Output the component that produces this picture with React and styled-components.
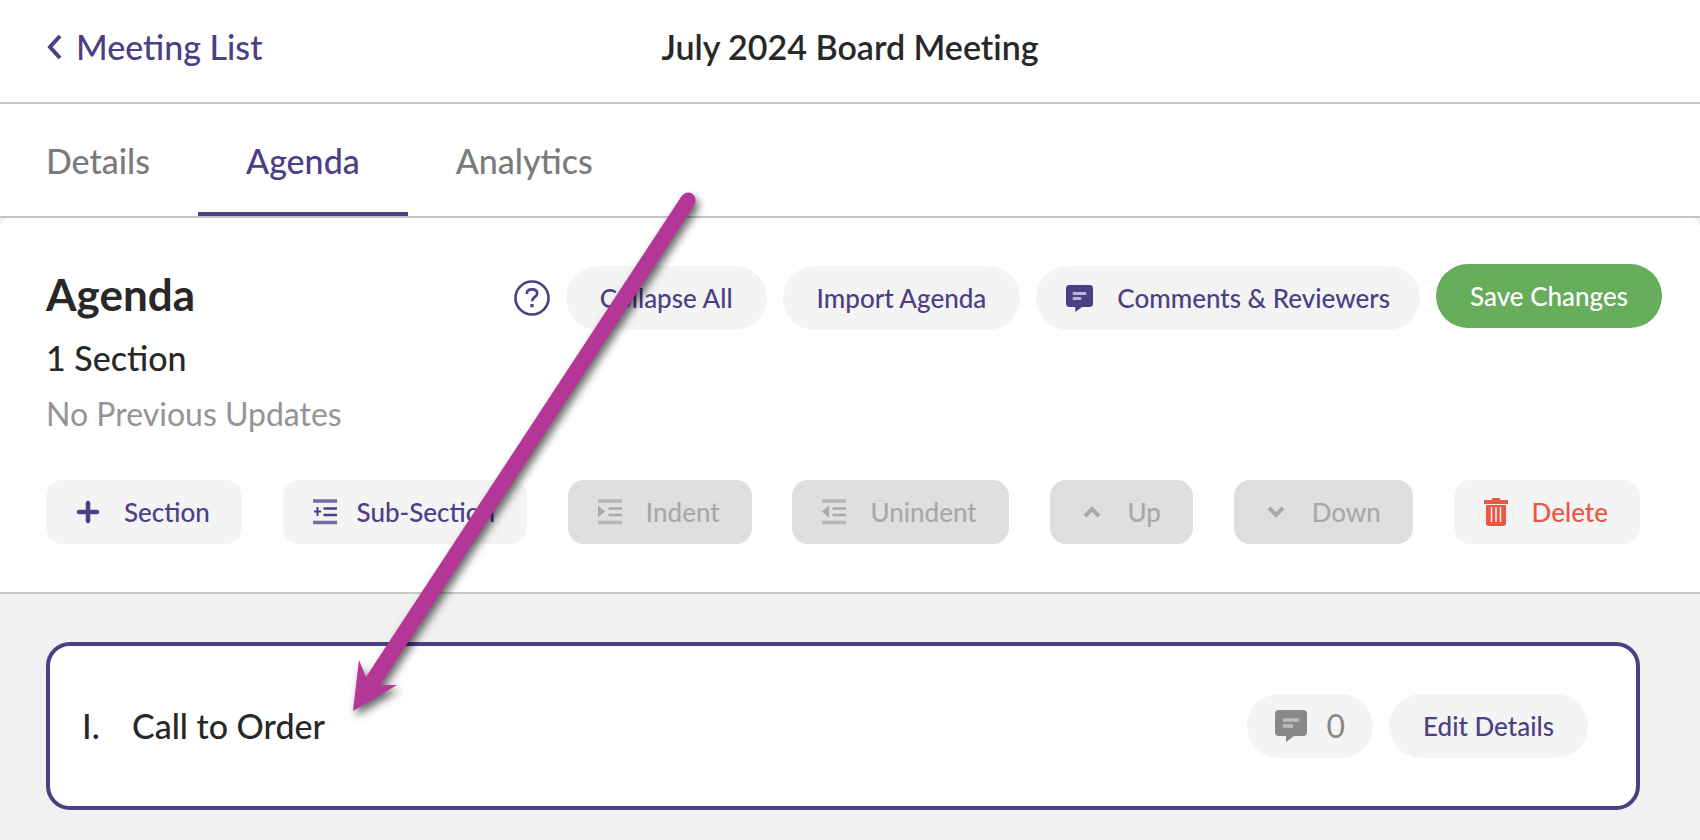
import React from "react";
import styled, { createGlobalStyle, css } from "styled-components";

const purple = "#4b3f86";
const ink = "#282828";

const GlobalStyle = createGlobalStyle`
  *, *::before, *::after { box-sizing: border-box; }
  html, body, #root { min-height: 100vh; }
  body { margin: 0; background: #f1f1f1; color: ${ink}; font-family: Lato, "Liberation Sans", sans-serif; font-weight: 500; }
  h1, h2, h3, p { margin: 0; }
  button { font-family: inherit; border: 0; margin: 0; cursor: pointer; }
`;

const Page = styled.div`
  position: relative;
  min-height: 100vh;
  overflow: hidden;
`;

const TopBar = styled.header`
  display: grid;
  grid-template-columns: 1fr auto 1fr;
  align-items: center;
  height: 104px;
  padding: 0 46px 8px;
  background: #fff;
  border-bottom: 2px solid #c9c9c9;
`;

const BackLink = styled.a`
  display: inline-flex;
  align-items: center;
  justify-self: start;
  gap: 14px;
  color: ${purple};
  font-size: 34px;
  line-height: 40px;
  text-decoration: none;
`;

const PageTitle = styled.h1`
  font-size: 34px;
  line-height: 40px;
  font-weight: 600;
  font-variant-ligatures: none;
`;

const Tabs = styled.nav`
  display: flex;
  height: 114px;
  background: #fff;
  border-bottom: 2px solid #c5c5c5;
`;

const Tab = styled.a`
  display: flex;
  align-items: center;
  padding: 6px 48px 0;
  border-bottom: 4px solid ${(p) => (p.$active ? purple : "transparent")};
  color: ${(p) => (p.$active ? purple : "#7b7b7b")};
  font-size: 34px;
  line-height: 40px;
  text-decoration: none;
  &:first-child { padding-left: 46px; }
`;

const Panel = styled.section`
  padding: 46px 38px 48px 46px;
  background: #fff;
  border-bottom: 2px solid #c9c9c9;
  border-radius: 10px 10px 0 0;
`;

const PanelHead = styled.div`
  display: flex;
  justify-content: space-between;
  align-items: flex-start;
`;

const Heading = styled.h2`
  margin-top: 2px;
  font-size: 44px;
  line-height: 56px;
  font-weight: 700;
`;

const Count = styled.p`
  margin-top: 16px;
  font-size: 34px;
  line-height: 40px;
`;

const Updated = styled.p`
  margin-top: 16px;
  color: #949496;
  font-size: 32px;
  line-height: 40px;
  font-weight: 400;
`;

const Actions = styled.div`
  display: flex;
  gap: 16px;
`;

const PanelActions = styled(Actions)`
  align-items: flex-end;
  height: 66px;
`;

const HelpButton = styled.button`
  display: flex;
  align-items: center;
  height: 64px;
  padding: 0;
  background: none;
  color: ${purple};
`;

const Pill = styled.button`
  display: flex;
  align-items: center;
  gap: ${(p) => p.$gap || 24}px;
  height: 64px;
  padding: 0 ${(p) => p.$pad || 34}px;
  border-radius: 32px;
  background: #f4f4f4;
  color: ${(p) => (p.$muted ? "#88888b" : purple)};
  font-size: ${(p) => (p.$muted ? 32 : 26)}px;
  line-height: 40px;
  font-weight: ${(p) => (p.$muted ? 400 : 500)};
  white-space: nowrap;
  ${(p) => p.$primary && css`
    align-self: flex-start;
    background: #67ad5b;
    color: #fff;
  `}
`;

const Toolbar = styled.div`
  display: flex;
  justify-content: space-between;
  margin: 46px 22px 0 0;
`;

const Tool = styled.button`
  display: flex;
  align-items: center;
  gap: ${(p) => p.$gap || 24}px;
  height: 64px;
  padding: 0 32px 0 30px;
  border-radius: 16px;
  background: #f4f4f4;
  color: ${(p) => (p.$danger ? "#ed5745" : purple)};
  font-size: 26px;
  line-height: 40px;
  font-weight: 500;
  white-space: nowrap;
  &:disabled {
    background: #dfdfdf;
    color: #a8a8a8;
    cursor: default;
  }
`;

const List = styled.ol`
  margin: 0;
  padding: 48px 60px 30px 46px;
  list-style: none;
`;

const Item = styled.li`
  display: flex;
  align-items: center;
  height: 168px;
  padding: 0 48px 0 32px;
  border: 4px solid ${purple};
  border-radius: 24px;
  background: #fff;
`;

const Numeral = styled.span`
  width: 50px;
  font-size: 34px;
  line-height: 40px;
`;

const ItemTitle = styled.h3`
  flex: 1;
  font-size: 34px;
  line-height: 40px;
  font-weight: 500;
`;

const Annotation = styled.svg`
  position: absolute;
  top: 180px;
  left: 330px;
  pointer-events: none;
  filter: drop-shadow(3px 5px 4px rgba(0, 0, 0, 0.6));
`;

const ChevronLeft = () => (
  <svg width="16" height="28" viewBox="0 0 16 28" fill="none" stroke="currentColor" strokeWidth="4" aria-hidden="true">
    <path d="M14 3L4 14l10 11" />
  </svg>
);

const HelpIcon = () => (
  <svg width="36" height="36" viewBox="0 0 36 36" fill="none" stroke="currentColor" strokeWidth="2.600" aria-hidden="true">
    <circle cx="18" cy="18" r="16.5" />
    <path d="M12.800 14c0-2.800 2-4.600 5.200-4.600s5.200 1.600 5.200 4.100c0 3.300-5.200 3.600-5.200 7.800" />
    <path d="M16.300 24h3.300v3.200h-3.300z" fill="currentColor" stroke="none" />
  </svg>
);

const CommentIcon = ({ size, line }) => (
  <svg width={size} height={size} viewBox="0 0 32 32" aria-hidden="true">
    <path fill="currentColor" d="M4 0h24a4 4 0 0 1 4 4v18a4 4 0 0 1-4 4h-9l-8 6v-6H4a4 4 0 0 1-4-4V4a4 4 0 0 1 4-4z" />
    <path stroke={line} strokeWidth="3.500" d="M8 10h16M8 16h10" />
  </svg>
);

const PlusIcon = () => (
  <svg width="24" height="24" viewBox="0 0 24 24" stroke="currentColor" strokeWidth="4.500" strokeLinecap="round" aria-hidden="true">
    <path d="M12 3v18M3 12h18" />
  </svg>
);

const marks = {
  plus: <path d="M1 12.500h7M4.500 8v9" strokeWidth="2" />,
  right: <path d="M0 6.500l7 6-7 6z" fill="currentColor" stroke="none" />,
  left: <path d="M7 6.500l-7 6 7 6z" fill="currentColor" stroke="none" />,
};

const IndentIcon = ({ mark }) => (
  <svg width="24" height="26" viewBox="0 0 24 26" fill="none" stroke="currentColor" strokeWidth="2.500" aria-hidden="true">
    <path d="M0 2h24M0 23.500h24" strokeWidth="3.500" opacity="0.75" />
    <path d="M10.500 9.500H24M10.500 16H24" />
    {marks[mark]}
  </svg>
);

const CaretIcon = ({ down }) => (
  <svg width="24" height="24" viewBox="0 0 24 24" fill="none" stroke="currentColor" strokeWidth="4" aria-hidden="true">
    <path d={down ? "M5 8l7 7 7-7" : "M5 16l7-7 7 7"} />
  </svg>
);

const TrashIcon = () => (
  <svg width="24" height="28" viewBox="0 0 24 28" aria-hidden="true">
    <path fill="currentColor" d="M8 0h8v2h8v4H0V2h8zM2 7h20v18a3 3 0 0 1-3 3H5a3 3 0 0 1-3-3z" />
    <path stroke="#f4f4f4" strokeWidth="1.500" d="M7.500 9v15M12 9v15M16.500 9v15" />
  </svg>
);

export default function App() {
  return (
    <Page>
      <GlobalStyle />
      <TopBar>
        <BackLink href="#meetings"><ChevronLeft />Meeting List</BackLink>
        <PageTitle>July 2024 Board Meeting</PageTitle>
      </TopBar>
      <Tabs>
        <Tab href="#details">Details</Tab>
        <Tab href="#agenda" $active aria-current="page">Agenda</Tab>
        <Tab href="#analytics">Analytics</Tab>
      </Tabs>
      <main>
        <Panel>
          <PanelHead>
            <div>
              <Heading>Agenda</Heading>
              <Count>1 Section</Count>
              <Updated>No Previous Updates</Updated>
            </div>
            <PanelActions>
              <HelpButton aria-label="Help"><HelpIcon /></HelpButton>
              <Pill>Collapse All</Pill>
              <Pill>Import Agenda</Pill>
              <Pill $pad={30}><CommentIcon size={27} line="#b9b3d6" />Comments &amp; Reviewers</Pill>
              <Pill $primary>Save Changes</Pill>
            </PanelActions>
          </PanelHead>
          <Toolbar>
            <Tool><PlusIcon />Section</Tool>
            <Tool $gap={20}><IndentIcon mark="plus" />Sub-Section</Tool>
            <Tool disabled><IndentIcon mark="right" />Indent</Tool>
            <Tool disabled><IndentIcon mark="left" />Unindent</Tool>
            <Tool disabled><CaretIcon />Up</Tool>
            <Tool disabled><CaretIcon down />Down</Tool>
            <Tool $danger><TrashIcon />Delete</Tool>
          </Toolbar>
        </Panel>
        <List>
          <Item>
            <Numeral>I.</Numeral>
            <ItemTitle>Call to Order</ItemTitle>
            <Actions>
              <Pill $muted $pad={28} $gap={20} aria-label="0 comments"><CommentIcon size={32} line="#bdbdbf" />0</Pill>
              <Pill>Edit Details</Pill>
            </Actions>
          </Item>
        </List>
      </main>
      <Annotation width="380" height="550" viewBox="330 180 380 550" fill="#b43696" aria-hidden="true">
        <path d="M681 197Q685 191 691 193Q697 196 695 204L380 685H397L353 711L359 660L366 677Z" />
      </Annotation>
    </Page>
  );
}
